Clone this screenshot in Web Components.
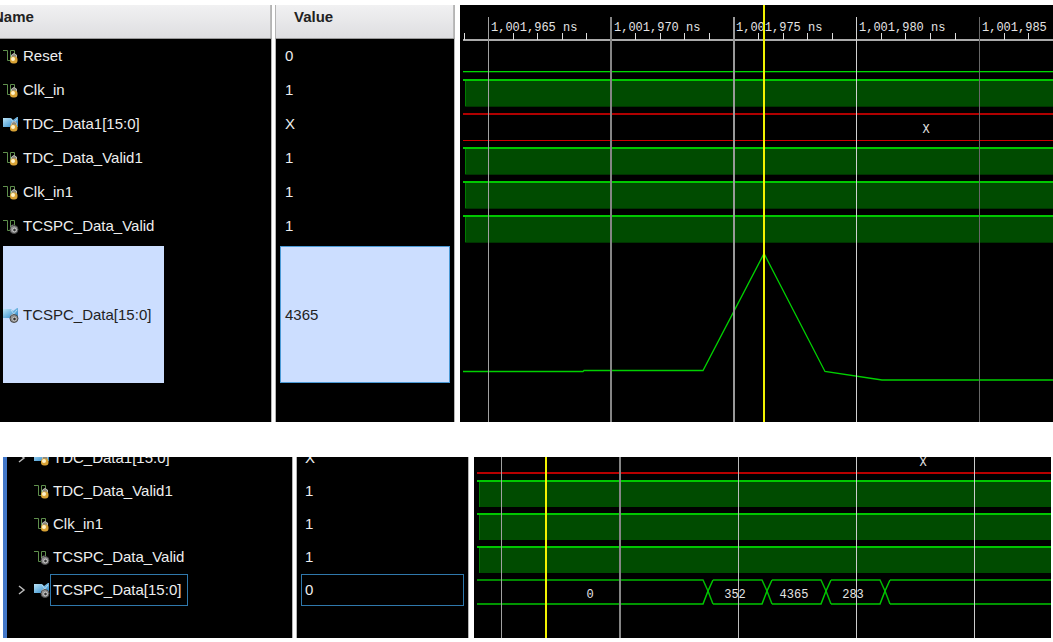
<!DOCTYPE html>
<html lang="en">
<head>
<meta charset="utf-8">
<title>Waveform</title>
<style>
body { margin: 0; background: #fff; font-family: "Liberation Sans", Arial, sans-serif; font-size: 15px; }
main { display: flex; flex-direction: column; gap: 35px; padding: 5px 0 4px; }
#detail { margin: 0 2px 0 3px; }
</style>
</head>
<body>
<main>
  <wave-viewer id="overview" label="Analog view"></wave-viewer>
  <wave-viewer id="detail" label="Bus view"></wave-viewer>
</main>
<script>
const sheet = (css) => `<style>${css}</style>`;

class SignalIcon extends HTMLElement {
  connectedCallback() {
    const bus = this.getAttribute('kind') === 'bus';
    const gear = this.getAttribute('badge') === 'gear';
    const base = bus
      ? `<defs><linearGradient id="b" x2="1" y2="1"><stop stop-color="#c4eafa"/><stop offset="1" stop-color="#1f80c6"/></linearGradient></defs>
         <path fill="url(#b)" d="M0 2h8l2 2 4-3h1v10h-2l-3-2-2 2H0z"/><path stroke="#d8f1ff" d="M8 3l6 8M9 9l5-6" opacity=".7"/>`
      : `<path fill="none" stroke="#5f8f4c" d="M0 2.500h4.500v10h3v-10h4v5"/>`;
    const badge = gear
      ? `<circle cx="11" cy="11.500" r="4" fill="#929292" stroke="#4a4a4a"/><circle cx="11.500" cy="12" r="1.800" fill="#333" stroke="#ddd" stroke-width=".8"/><path d="M8 8.500l2-2" stroke="#bbb"/>`
      : `<path fill="#8a8a80" stroke="#b8b8b0" d="M8.500 10V7q2.500-3 5 0v3"/><rect x="7" y="8.500" width="7.500" height="7" rx="3" fill="#d8a235"/><circle cx="10" cy="11" r="2" fill="#fff3c8"/>`;
    this.attachShadow({ mode: 'open' }).innerHTML =
      sheet(':host{display:block;flex:none;width:16px;height:16px}svg{display:block}') +
      `<svg width="16" height="16" viewBox="0 0 16 16" aria-hidden="true">${base}${badge}</svg>`;
  }
}
customElements.define('signal-icon', SignalIcon);

/* One signal trace; coordinates are relative to the wave column. */
class WaveTrace extends HTMLElement {
  connectedCallback() {
    const h = +this.getAttribute('height');
    const top = +this.getAttribute('top');
    const at = +(this.getAttribute('label-x') || 0);
    let s = '';
    switch (this.getAttribute('kind')) {
      case 'low':
        s = `<rect x="3" y="${h - 2}" width="100%" height="1" fill="#00d800"/><rect x="3" y="${h - 1}" width="100%" height="1" fill="#004000"/>`;
        break;
      case 'clock':
        s = `<rect x="5" y="${top}" width="100%" height="27" fill="#004b00"/>
             <rect x="5" y="${top}" width="1" height="27" fill="#007c00"/>
             <rect x="5" y="${top + 26}" width="100%" height="1" fill="#003400"/>
             <rect x="3" y="${top - 1}" width="100%" height="2" fill="#00c800"/>`;
        break;
      case 'unknown':
        s = `<rect x="3" y="${top - 1}" width="100%" height="2" fill="#b00000"/>
             <rect x="3" y="${top + 26}" width="100%" height="1" fill="#d00000"/>
             <text x="${at}" y="26">X</text>`;
        break;
      case 'unknown-end':
        s = `<rect x="3" y="15" width="100%" height="2" fill="#b80000"/><text x="${at}" y="9">X</text>`;
        break;
      case 'analog':
        s = `<polyline fill="none" stroke="#00d000" stroke-width="1.300" points="3,128.500 123,128.500 124,127.500 243,127.500 304,10.500 365,128.500 422,137 4000,137"/>`;
        break;
      case 'bus': {
        const cross = [234, 293, 352, 411];
        let a = 'M3 7H', b = 'M3 31H';
        cross.forEach(x => {
          a += `${x - 5}L${x} 18L${x + 5} 31M${x + 5} 7H`;
          b += `${x - 5}L${x} 18L${x + 5} 7M${x + 5} 31H`;
        });
        s = `<path fill="none" stroke="#00b800" stroke-width="1.500" d="${a}4000"/><path fill="none" stroke="#00c800" stroke-width="1.500" d="${b}4000"/>` +
          [[116, '0'], [261, '352'], [320, '4365'], [379, '283']].map(([x, t]) => `<text x="${x}" y="25">${t}</text>`).join('');
      }
    }
    this.attachShadow({ mode: 'open' }).innerHTML =
      sheet(`:host{display:block}svg{display:block;width:100%;overflow:hidden}
             text{font:12px "Liberation Mono",monospace;fill:#e4e4e4;text-anchor:middle}`) +
      `<svg height="${h}">${s}</svg>`;
  }
}
customElements.define('wave-trace', WaveTrace);

class TimeRuler extends HTMLElement {
  connectedCallback() {
    let s = '<rect x="3" y="34" width="100%" height="2" fill="#aaa"/>';
    for (let i = 0; i < 80; i++) {
      const x = Math.round(3.500 + i * 24.550);
      if (i % 5 !== 1) s += `<rect x="${x}" y="28" width="1" height="7" fill="#ddd"/>`;
    }
    [965, 970, 975, 980, 985].forEach((n, i) => {
      s += `<text x="${31 + Math.round(i * 122.700)}" y="26">1,001,${n} ns</text>`;
    });
    this.attachShadow({ mode: 'open' }).innerHTML =
      sheet(`:host{display:block}svg{display:block;width:100%;height:36px;margin-bottom:-2px}
             text{font:12px "Liberation Mono",monospace;fill:#e4e4e4}`) + `<svg>${s}</svg>`;
  }
}
customElements.define('time-ruler', TimeRuler);

class WaveViewer extends HTMLElement {
  set data(d) {
    const row = (r) => {
      const h = r.height || d.rowHeight;
      const cls = [r.selected && 'selected', r.outlined && 'outlined', r.clipped && 'clipped'].filter(Boolean).join(' ');
      const chevron = d.tree
        ? (r.icon === 'bus'
          ? `<button aria-label="Expand ${r.name}"><svg width="16" height="16" fill="none" stroke="#bbb" stroke-width="1.500"><path d="M5 4l5 4-5 4"/></svg></button>`
          : '<i class="spacer"></i>')
        : '';
      return `<tr class="${cls}" style="--h:${h}px">
        <td class="name"><div class="in"><div class="line">${chevron}<div class="item"><signal-icon kind="${r.icon}" badge="${r.badge}"></signal-icon><span class="txt">${r.name}</span></div></div></div></td>
        <td class="value"><div class="in"><div class="line"><span class="val">${r.value}</span></div></div></td>
        <td><wave-trace kind="${r.wave}" height="${h}" top="${d.top}" label-x="${r.labelX || 0}"></wave-trace></td></tr>`;
    };
    const head = d.header ? `<thead><tr>
        <th class="name" scope="col"><div class="in head first">Name</div></th>
        <th class="value" scope="col"><div class="in head">Value</div></th>
        <th scope="col"><time-ruler></time-ruler></th></tr></thead>` : '';
    const grid = d.grid.map(([x, w, c]) => `<rect x="${x}" y="${d.header ? 12 : 0}" width="${w}" height="100%" fill="${c}"/>`).join('');
    this.attachShadow({ mode: 'open' }).innerHTML = sheet(`
      :host{display:block;position:relative;background:#000;color:#eee;overflow:hidden;--name:${d.cols[0]}px;--value:${d.cols[1]}px}
      :host(#detail){border-left:4px solid #4277c8}
      table{width:100%;table-layout:fixed;border-spacing:0}
      col.n{width:var(--name)} col.v{width:var(--value)}
      td,th{padding:0;text-align:left;vertical-align:top}
      .name .in{border-right:1px solid #b4b4b4}
      .value{background:#fff;padding:0 5px 0 3px}
      .value .in{border:solid #b4b4b4;border-width:0 1px}
      .in{background:#000;height:var(--h);overflow:hidden;box-sizing:border-box;display:flex;align-items:center}
      .line{flex:1;display:flex;align-items:center;height:100%;box-sizing:border-box}
      .name .line{padding-left:${d.tree ? 7 : 3}px}
      .value .line{padding:0 4px}
      .clipped .in{align-items:flex-end} .clipped .line{height:33px;flex-shrink:0}
      .item{display:flex;align-items:center;gap:${d.tree ? 0 : 4}px}
      .txt,.val{white-space:nowrap;line-height:30px}
      .val{flex:1;border:1px solid transparent;padding-left:${d.tree ? 3 : 4}px}
      .head{--h:34px;color:#222;font-weight:bold;background:linear-gradient(#f1f1f2,#dedee1);border-bottom:1px solid #999!important;padding:0 0 10px 18px;box-shadow:inset -1px 0 #bbb}
      .first{padding-left:0;text-indent:-7px}
      button{border:0;padding:0;margin:0 4px 0 0;background:none;width:16px;height:16px}
      button svg{display:block}
      .spacer{width:20px}
      ${d.tree ? '.txt{border:1px solid transparent;padding:0 6px 0 2px}' : ''}
      .outlined .txt,.outlined .val{border-color:#2f78ac}
      .selected .item{background:#ccdeff;color:#222;height:137px;padding-right:13px}
      .selected .val{background:#ccdeff;color:#222;border-color:#4b9ad6;line-height:135px}
      .fill{--h:${d.fill}px}
      .overlay{position:absolute;top:0;left:calc(var(--name) + var(--value));width:calc(100% - var(--name) - var(--value));height:100%;pointer-events:none}
    `) + `<table aria-label="${this.getAttribute('label')}"><colgroup><col class="n"><col class="v"><col></colgroup>${head}
      <tbody>${d.rows.map(row).join('')}<tr class="fill"><td class="name"><div class="in"></div></td><td class="value"><div class="in"></div></td><td></td></tr></tbody></table>
      <svg class="overlay" aria-hidden="true">${grid}<rect x="${d.cursor}" width="2" height="100%" fill="#f2f200"/></svg>`;
  }
}
customElements.define('wave-viewer', WaveViewer);

const bit = (name, value, wave, badge = 'lock') => ({ name, value, wave, badge, icon: 'bit' });
const bus = (name, value, wave, badge, extra) => ({ name, value, wave, badge, icon: 'bus', ...extra });

document.getElementById('overview').data = {
  header: true, cols: [272, 188], rowHeight: 34, top: 7, fill: 36, cursor: 303,
  grid: [[28, 1, '#a0a0a0'], [150, 2, '#858585'], [273, 2, '#999'], [396, 1, '#d0d0d0'], [519, 1, '#686868']],
  rows: [
    bit('Reset', '0', 'low'),
    bit('Clk_in', '1', 'clock'),
    bus('TDC_Data1[15:0]', 'X', 'unknown', 'lock', { labelX: 466 }),
    bit('TDC_Data_Valid1', '1', 'clock'),
    bit('Clk_in1', '1', 'clock'),
    bit('TCSPC_Data_Valid', '1', 'clock', 'gear'),
    bus('TCSPC_Data[15:0]', '4365', 'analog', 'gear', { height: 143, selected: true })
  ]
};
document.getElementById('detail').data = {
  tree: true, cols: [286, 181], rowHeight: 33, top: 7, fill: 32, cursor: 71,
  grid: [[27, 1, '#a0a0a0'], [145, 2, '#858585'], [264, 1, '#bbb'], [382, 1, '#ccc'], [500, 1, '#ccc']],
  rows: [
    bus('TDC_Data1[15:0]', 'X', 'unknown-end', 'lock', { height: 17, clipped: true, labelX: 449 }),
    bit('TDC_Data_Valid1', '1', 'clock'),
    bit('Clk_in1', '1', 'clock'),
    bit('TCSPC_Data_Valid', '1', 'clock', 'gear'),
    bus('TCSPC_Data[15:0]', '0', 'bus', 'gear', { outlined: true })
  ]
};
</script>
</body>
</html>
